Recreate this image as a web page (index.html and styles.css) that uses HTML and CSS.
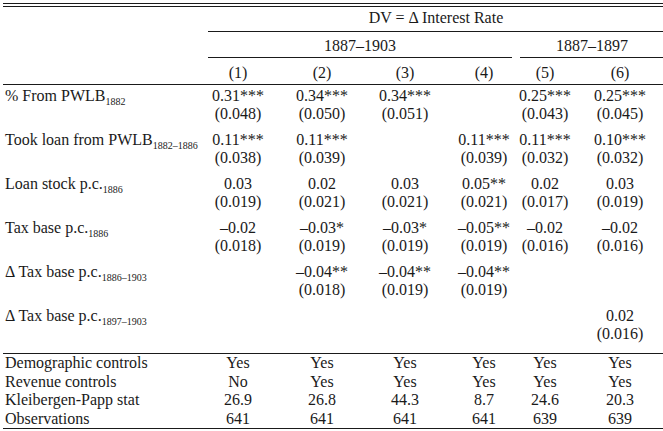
FILE: index.html
```html
<!DOCTYPE html>
<html>
<head>
<meta charset="utf-8">
<link rel="stylesheet" href="styles.css">
</head>
<body>
<div class="table">
  <div class="rule-double"></div>
  <div class="row">
    <div class="label"></div>
    <div class="span-all">DV = Δ Interest Rate</div>
  </div>
  <div class="row">
    <div class="label"></div>
    <div class="span-a">1887–1903</div>
    <div class="span-b">1887–1897</div>
  </div>
  <div class="row colnums">
    <div class="label"></div>
    <div>(1)</div><div>(2)</div><div>(3)</div><div>(4)</div><div>(5)</div><div>(6)</div>
  </div>

  <div class="body">
    <div class="block">
      <div class="row"><div class="label">% From PWLB<span class="sub">1882</span></div><div>0.31***</div><div>0.34***</div><div>0.34***</div><div></div><div>0.25***</div><div>0.25***</div></div>
      <div class="row"><div class="label"></div><div>(0.048)</div><div>(0.050)</div><div>(0.051)</div><div></div><div>(0.043)</div><div>(0.045)</div></div>
    </div>
    <div class="block">
      <div class="row"><div class="label">Took loan from PWLB<span class="sub">1882–1886</span></div><div>0.11***</div><div>0.11***</div><div></div><div>0.11***</div><div>0.11***</div><div>0.10***</div></div>
      <div class="row"><div class="label"></div><div>(0.038)</div><div>(0.039)</div><div></div><div>(0.039)</div><div>(0.032)</div><div>(0.032)</div></div>
    </div>
    <div class="block">
      <div class="row"><div class="label">Loan stock p.c.<span class="sub">1886</span></div><div>0.03</div><div>0.02</div><div>0.03</div><div>0.05**</div><div>0.02</div><div>0.03</div></div>
      <div class="row"><div class="label"></div><div>(0.019)</div><div>(0.021)</div><div>(0.021)</div><div>(0.021)</div><div>(0.017)</div><div>(0.019)</div></div>
    </div>
    <div class="block">
      <div class="row"><div class="label">Tax base p.c.<span class="sub">1886</span></div><div>–0.02</div><div>–0.03*</div><div>–0.03*</div><div>–0.05**</div><div>–0.02</div><div>–0.02</div></div>
      <div class="row"><div class="label"></div><div>(0.018)</div><div>(0.019)</div><div>(0.019)</div><div>(0.019)</div><div>(0.016)</div><div>(0.016)</div></div>
    </div>
    <div class="block">
      <div class="row"><div class="label">Δ Tax base p.c.<span class="sub">1886–1903</span></div><div></div><div>–0.04**</div><div>–0.04**</div><div>–0.04**</div><div></div><div></div></div>
      <div class="row"><div class="label"></div><div></div><div>(0.018)</div><div>(0.019)</div><div>(0.019)</div><div></div><div></div></div>
    </div>
    <div class="block last">
      <div class="row"><div class="label">Δ Tax base p.c.<span class="sub">1897–1903</span></div><div></div><div></div><div></div><div></div><div></div><div>0.02</div></div>
      <div class="row"><div class="label"></div><div></div><div></div><div></div><div></div><div></div><div>(0.016)</div></div>
    </div>
  </div>

  <div class="controls">
    <div class="row"><div class="label">Demographic controls</div><div>Yes</div><div>Yes</div><div>Yes</div><div>Yes</div><div>Yes</div><div>Yes</div></div>
    <div class="row"><div class="label">Revenue controls</div><div>No</div><div>Yes</div><div>Yes</div><div>Yes</div><div>Yes</div><div>Yes</div></div>
    <div class="row"><div class="label">Kleibergen-Papp stat</div><div>26.9</div><div>26.8</div><div>44.3</div><div>8.7</div><div>24.6</div><div>20.3</div></div>
    <div class="row"><div class="label">Observations</div><div>641</div><div>641</div><div>641</div><div>641</div><div>639</div><div>639</div></div>
  </div>
</div>
</body>
</html>
```

FILE: styles.css
```css
html, body {
  margin: 0;
  padding: 0;
  background: #ffffff;
  overflow: hidden;
}

.table {
  margin-left: 3px;
  padding-top: 3px;
  width: 660px;
  font-family: "Liberation Serif", "Times New Roman", serif;
  font-size: 16px;
  color: #1a1a1a;
}

.rule-double {
  height: 2px;
  border-top: 1px solid #1a1a1a;
  border-bottom: 1px solid #1a1a1a;
}

.row {
  display: grid;
  grid-template-columns: 185px 100px 68px 98px 60px 62px 88px;
  line-height: 18px;
  text-align: center;
  white-space: nowrap;
}

.row .label {
  text-align: left;
  padding-left: 2px;
}

.span-all {
  grid-column: 2 / 8;
  margin-left: 20px;
  padding: 2px 0 4px;
  border-bottom: 1px solid #1a1a1a;
}

.span-a {
  grid-column: 2 / 6;
  margin-left: 20px;
  margin-right: 2px;
  padding: 5px 0 2px;
  border-bottom: 1px solid #1a1a1a;
}

.span-b {
  grid-column: 6 / 8;
  margin-left: 6px;
  padding: 5px 0 2px;
  border-bottom: 1px solid #1a1a1a;
}

.colnums {
  padding: 6px 0 2px;
  border-bottom: 1px solid #1a1a1a;
}

.body {
  padding-top: 2px;
  padding-bottom: 10px;
  border-bottom: 1px solid #1a1a1a;
}

.block {
  padding-bottom: 8px;
}

.block.last {
  padding-bottom: 0;
}

.sub {
  font-size: 10px;
  vertical-align: -4px;
  line-height: 0;
}

.controls {
  border-bottom: 1px solid #1a1a1a;
}

.controls .row {
  line-height: 18.5px;
}
```
